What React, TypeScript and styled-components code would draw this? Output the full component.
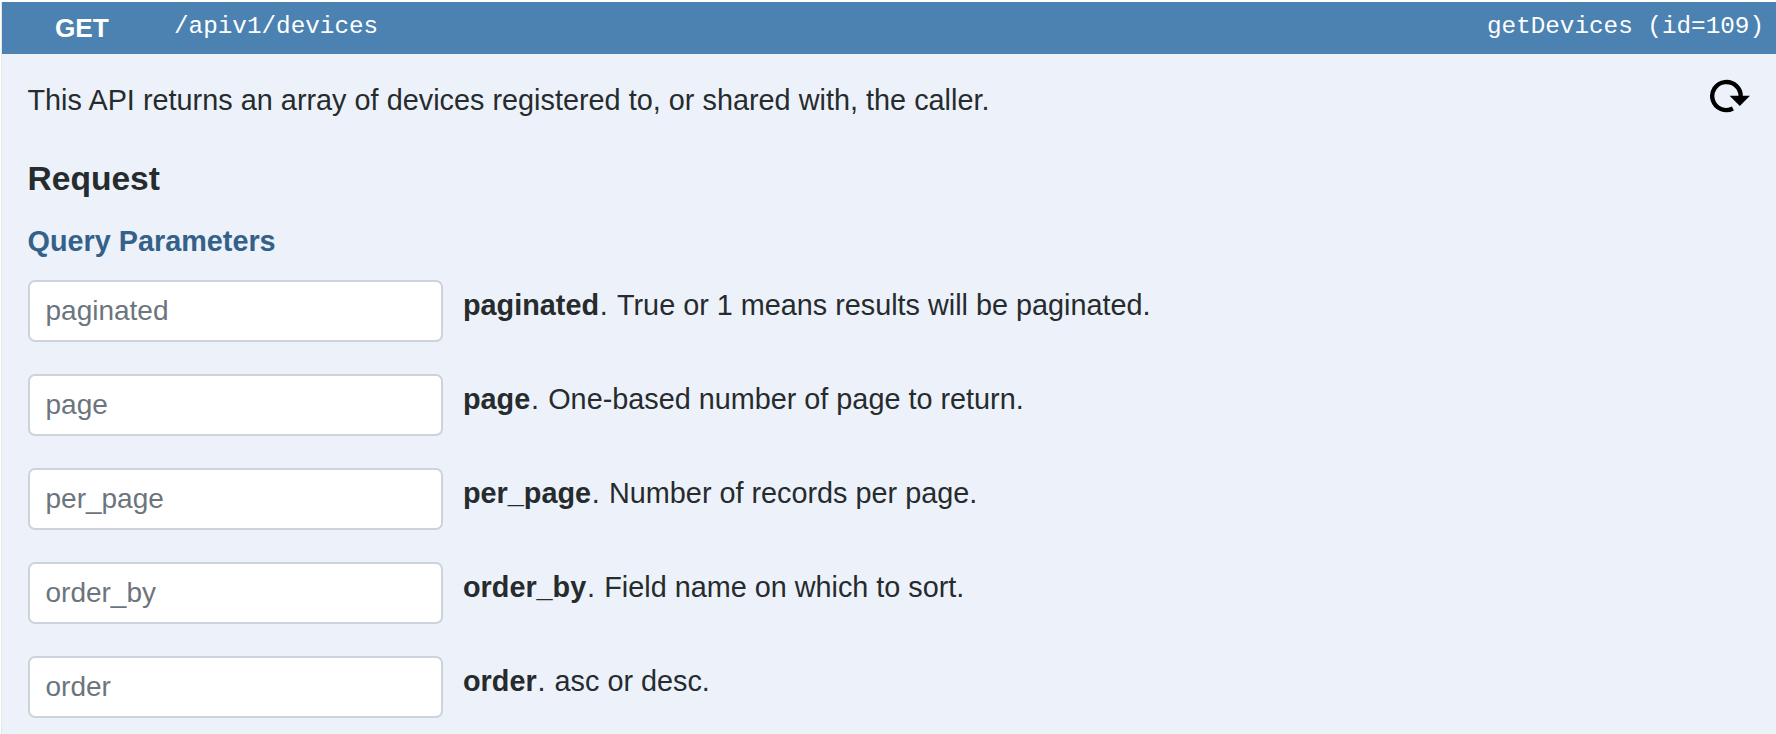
import React from "react";
import styled, { createGlobalStyle } from "styled-components";

const GlobalStyle = createGlobalStyle`
  *, *::before, *::after { box-sizing: border-box; }
  html, body { margin: 0; background: #fff; }
  body {
    height: 734px;
    overflow: hidden;
    font-family: "Liberation Sans", Arial, sans-serif;
    font-size: 28.8px;
    line-height: 42px;
    color: #262b2e;
  }
`;

const Operation = styled.section`
  height: 734px;
  margin-top: 2px;
  margin-left: 1px;
  border-left: 1px solid #e6e8e8;
  background: #edf2fa;
`;

const Header = styled.header`
  display: flex;
  height: 52px;
  padding: 0 12px 0 53px;
  background: #4b82b2;
  color: #fff;
`;

const Method = styled.strong`
  width: 119px;
  font-size: 26.2px;
  line-height: 52px;
`;

const Mono = styled.code<{ $end?: boolean }>`
  margin-left: ${(p) => (p.$end ? "auto" : "0")};
  font-family: "Liberation Mono", "Courier New", monospace;
  font-size: 24.3px;
  line-height: 50px;
`;

const Body = styled.div`
  padding: 25px 26px 0 25.5px;
`;

const Summary = styled.div`
  display: flex;
  justify-content: space-between;
`;

const Text = styled.p`
  margin: 0;
  word-spacing: 0.12px;
`;

const Refresh = styled.button`
  width: 42px;
  height: 34px;
  padding: 0;
  border: 0;
  background: none;
  svg { display: block; }
`;

const Title = styled.h2`
  margin: 36px 0 0;
  font-size: 33.6px;
  line-height: 44px;
`;

const Subtitle = styled.h3`
  margin: 20px 0 19px;
  font-size: 28.8px;
  line-height: 40px;
  color: #34618a;
`;

const Params = styled.div`
  display: grid;
  gap: 32px;
  margin-left: 0.5px;
`;

const Param = styled.label`
  display: flex;
  gap: 20px;
  height: 62px;
`;

const Field = styled.input`
  width: 415px;
  height: 62px;
  padding: 0 15.5px;
  border: 2px solid #cdd3da;
  border-radius: 7px;
  background: #fff;
  font: 28px "Liberation Sans", Arial, sans-serif;
  color: #495057;
  &::placeholder { color: #6c757d; opacity: 1; }
`;

const Description = styled.p`
  margin: 4px 0 0;
`;

const Name = styled.strong`
  margin-right: 0.8px;
`;

const Detail = styled.span`
  margin-left: 1.2px;
`;

const parameters = [
  { name: "paginated", text: "True or 1 means results will be paginated." },
  { name: "page", text: "One-based number of page to return." },
  { name: "per_page", text: "Number of records per page." },
  { name: "order_by", text: "Field name on which to sort." },
  { name: "order", text: "asc or desc." },
];

export default function App() {
  return (
    <>
      <GlobalStyle />
      <Operation>
        <Header>
          <Method>GET</Method>
          <Mono>/apiv1/devices</Mono>
          <Mono $end>getDevices (id=109)</Mono>
        </Header>
        <Body>
          <Summary>
            <Text>
              This API returns an array of devices registered to, or shared with, the caller.
            </Text>
            <Refresh aria-label="Reset">
              <svg width="42" height="34" viewBox="0 0 42 34">
                <path
                  d="M32.6 18 A14.2 14 0 1 0 24.9 29.5"
                  fill="none"
                  stroke="#000"
                  strokeWidth="4.4"
                />
                <path d="M21.6 16.8H42L31.8 27z" />
              </svg>
            </Refresh>
          </Summary>
          <Title>Request</Title>
          <Subtitle>Query Parameters</Subtitle>
          <Params>
            {parameters.map((p) => (
              <Param key={p.name}>
                <Field placeholder={p.name} />
                <Description>
                  <Name>{p.name}</Name>. <Detail>{p.text}</Detail>
                </Description>
              </Param>
            ))}
          </Params>
        </Body>
      </Operation>
    </>
  );
}
